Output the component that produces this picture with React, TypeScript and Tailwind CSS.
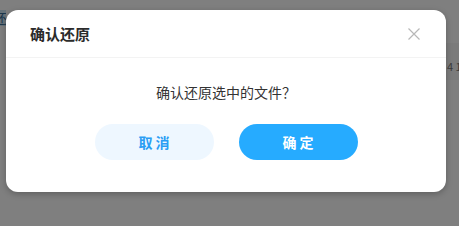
import React from 'react'

// 还原确认弹窗 — 背景页 + 遮罩 + 对话框

const FONT = { fontFamily: '"Microsoft YaHei", "Noto Sans CJK SC", "Noto Sans", sans-serif' }

function CloseIcon() {
  return (
    <svg width="12" height="12" viewBox="0 0 12 12" fill="none">
      <path d="M0.5 0.5 L11.5 11.5 M11.5 0.5 L0.5 11.5" stroke="#b8b8b8" strokeWidth="1.2" />
    </svg>
  )
}

export default function App() {
  return (
    <div className="relative w-[459px] h-[226px] overflow-hidden bg-white" style={FONT}>

      {/* Background page (under the mask) */}
      <div className="flex flex-col h-full">
        <div className="mt-[10px] h-[16px] w-[12px] bg-[#cfe6f5] text-[13px] leading-[16px] text-[#3b6e96] -ml-[6px] overflow-hidden whitespace-nowrap">还</div>
        <div className="mt-[17px] ml-auto h-[37px] w-[14px] bg-[#f7f7f7] flex items-end pb-[6px] pl-[2px] text-[11px] text-[#777] overflow-hidden whitespace-nowrap">4 1</div>
      </div>

      {/* Mask */}
      <div className="absolute inset-0 bg-black/50 flex items-start pt-[10px] pl-[6px]">

        {/* Dialog */}
        <div className="w-[440px] rounded-[12px] bg-white shadow-[0_2px_6px_rgba(0,0,0,0.25)] flex flex-col">

          {/* Header */}
          <div className="h-12 flex items-center justify-between pl-6 pr-[26px] border-b border-[#f3f3f3]">
            <span className="text-[15px] font-bold text-[#2b2b2b] pt-[2px]">确认还原</span>
            <CloseIcon />
          </div>

          {/* Body */}
          <div className="pt-6 pb-8 flex flex-col items-center">
            <p className="text-[14px] leading-5 text-[#333]">确认还原选中的文件？</p>
            <div className="mt-[22px] flex gap-[25px]">
              <button className="w-[119px] h-9 rounded-full bg-[#eef7ff] text-[#2a9df4] text-[14px] font-bold tracking-[3px] pl-[3px]">
                取消
              </button>
              <button className="w-[119px] h-9 rounded-full bg-[#26abff] text-white text-[14px] font-bold tracking-[3px] pl-[3px]">
                确定
              </button>
            </div>
          </div>

        </div>
      </div>
    </div>
  )
}
